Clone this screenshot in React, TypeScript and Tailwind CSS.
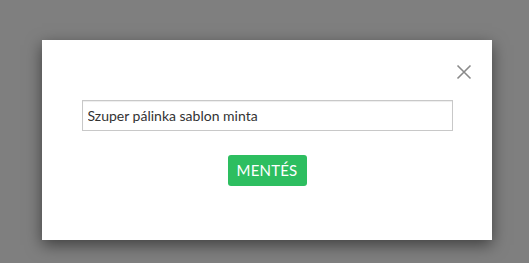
import { X } from 'lucide-react'

export default function App() {
  return (
    <div className="min-h-screen w-full bg-[#7f7f7f] pt-[40px] pl-[42px]" style={{ fontFamily: 'Lato, "Noto Sans", sans-serif' }}>
      <div className="relative w-[450px] h-[200px] bg-white shadow-[0_5px_15px_rgba(0,0,0,0.5)]">
        <button className="absolute right-[20px] top-[24px] text-[#8a8a8a]">
          <svg width="16" height="16" viewBox="0 0 16 16" fill="none" stroke="currentColor" strokeWidth="1.6">
            <path d="M1.5 1.5 L14.5 14.5 M14.5 1.5 L1.5 14.5" />
          </svg>
        </button>
        <div className="flex flex-col items-center pt-[60px]">
          <input
            defaultValue="Szuper pálinka sablon minta"
            className="w-[371px] h-[31px] border border-[#c8c8c8] px-[5px] text-[14px] text-[#333] outline-none shadow-[inset_0_1px_1px_rgba(0,0,0,0.075)]"
          />
          <button className="mt-[24px] w-[79px] h-[31px] rounded-[3px] bg-[#2dbe60] text-white text-[15px] uppercase tracking-[0.2px]">
            Mentés
          </button>
        </div>
      </div>
    </div>
  )
}
